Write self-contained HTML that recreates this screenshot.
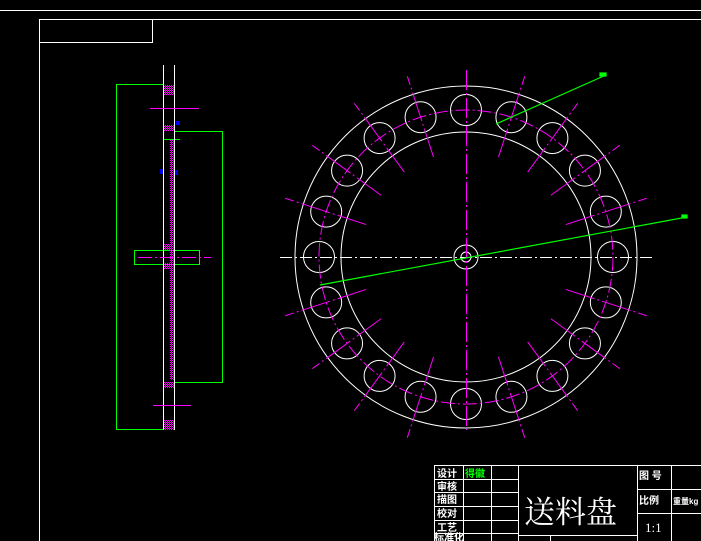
<!DOCTYPE html><html><head><meta charset="utf-8"><style>
html,body{margin:0;padding:0;background:#000;width:701px;height:541px;overflow:hidden}
svg{display:block}
text{font-family:"Liberation Sans","Noto Sans CJK SC",sans-serif;fill:#fff}
</style></head><body>
<svg id="s" width="701" height="541" viewBox="0 0 701 541" xmlns="http://www.w3.org/2000/svg">
<defs><pattern id="hp" width="2" height="2" patternUnits="userSpaceOnUse"><rect width="1" height="1" fill="#f0f"/><rect x="1" y="1" width="1" height="1" fill="#f0f"/></pattern></defs>
<g stroke="#fff" stroke-width="1" fill="none">
<line x1="0" y1="10.5" x2="701" y2="10.5"/>
<line x1="39.5" y1="19.5" x2="701" y2="19.5"/>
<line x1="39.5" y1="19.5" x2="39.5" y2="541"/>
<rect x="39.5" y="19.5" width="113" height="23"/>
<circle cx="466" cy="257" r="171"/>
<circle cx="466" cy="257" r="125"/>
<circle cx="466" cy="257" r="12"/>
<circle cx="466" cy="257" r="5"/>
<line x1="280" y1="257.5" x2="655" y2="257.5" stroke-dasharray="12,3,2,3"/>
</g>
<g id="holes" stroke="#fff" fill="none"></g>
<g id="mag" stroke="#f0f" fill="none">
<circle cx="466" cy="257" r="147" stroke-dasharray="14,3,2,3"/>
<line x1="466.5" y1="70" x2="466.5" y2="430" stroke-dasharray="20,3,2,3"/>
</g>
<g stroke="#0f0" fill="none" stroke-width="1.2">
<line x1="496" y1="124" x2="606" y2="75"/>
<line x1="320" y1="285" x2="687" y2="217"/>
<rect x="600" y="73" width="6" height="3" fill="#0f0"/>
<rect x="682" y="215" width="5" height="3" fill="#0f0"/>
</g>
<g stroke="#0f0" fill="none">
<polyline points="163,84.5 116.5,84.5 116.5,429.5 163,429.5"/>
<polyline points="174,131.5 222.5,131.5 222.5,382.5 174,382.5"/>
<rect x="134.5" y="250.5" width="65" height="14"/>
<line x1="163.5" y1="65" x2="163.5" y2="84"/>
<line x1="174.5" y1="65" x2="174.5" y2="84"/>
<line x1="163" y1="139.5" x2="180" y2="139.5"/>
</g>
<g stroke="#fff" fill="none">
<line x1="163.5" y1="65" x2="163.5" y2="430"/>
<line x1="174.5" y1="65" x2="174.5" y2="430"/>
</g>
<g fill="url(#hp)" stroke="none">
<rect x="164" y="85" width="10" height="10"/>
<rect x="164" y="125" width="10" height="6"/>
<rect x="170" y="140" width="4" height="240"/>
<rect x="164" y="244" width="10" height="6"/>
<rect x="164" y="263" width="10" height="6"/>
<rect x="164" y="382" width="10" height="6"/>
<rect x="164" y="420" width="10" height="10"/>
</g>
<g stroke="#f0f">
<line x1="150" y1="108.5" x2="199" y2="108.5"/>
<line x1="138" y1="257.5" x2="211" y2="257.5" stroke-dasharray="14,3,2,3"/>
<line x1="153" y1="405.5" x2="191" y2="405.5"/>
</g>
<g fill="#00f"><rect x="176" y="121" width="4" height="4"/><rect x="160" y="169" width="3" height="5"/><rect x="175" y="170" width="3" height="5"/></g>
<g stroke="#fff" fill="none">
<rect x="434.5" y="465.5" width="270" height="80"/>
<line x1="463.5" y1="465" x2="463.5" y2="541"/>
<line x1="491.5" y1="465" x2="491.5" y2="541"/>
<line x1="518.5" y1="465" x2="518.5" y2="541"/>
<line x1="637.5" y1="465" x2="637.5" y2="541"/>
<line x1="671.5" y1="465" x2="671.5" y2="541"/>
<line x1="434" y1="479.5" x2="518" y2="479.5"/>
<line x1="434" y1="492.5" x2="518" y2="492.5"/>
<line x1="434" y1="506.5" x2="518" y2="506.5"/>
<line x1="434" y1="520.5" x2="518" y2="520.5"/>
<line x1="434" y1="533.5" x2="518" y2="533.5"/>
<line x1="518" y1="535.5" x2="637" y2="535.5"/>
<line x1="550.5" y1="535" x2="550.5" y2="541"/>
<line x1="637" y1="489.5" x2="701" y2="489.5"/>
<line x1="637" y1="513.5" x2="701" y2="513.5"/>
</g>
<g font-size="10" font-weight="bold">
<text x="437" y="477">设计</text>
<text x="465" y="477" style="fill:#0f0">得徽</text>
<text x="437" y="490">审核</text>
<text x="437" y="503">描图</text>
<text x="437" y="517">校对</text>
<text x="437" y="531">工艺</text>
<text x="434" y="541">标准化</text>
<text x="639" y="479">图 号</text>
<text x="639" y="504">比例</text>
<text x="673" y="504" font-size="8">重量kg</text>
</g>
<text x="524" y="523" font-size="31" style="font-family:'Noto Serif CJK SC',serif">送料盘</text>
<text x="645" y="532" font-size="13" style="font-family:'Liberation Serif',serif">1:1</text>
</svg>
<script>
var ns="http://www.w3.org/2000/svg",h=document.getElementById("holes"),m=document.getElementById("mag");
for(var i=0;i<20;i++){var a=i*Math.PI/10,c=Math.cos(a),s=Math.sin(a);
var x=466+147*c,y=257-147*s;
var e=document.createElementNS(ns,"circle");e.setAttribute("cx",x);e.setAttribute("cy",y);e.setAttribute("r",15.5);h.appendChild(e);
if(i%5!=0){var l=document.createElementNS(ns,"line");
l.setAttribute("x1",466+105*c);l.setAttribute("y1",257-105*s);l.setAttribute("x2",466+190*c);l.setAttribute("y2",257-190*s);
l.setAttribute("stroke-dasharray","30,3,2,3");m.appendChild(l);}
}
</script>
</body></html>
